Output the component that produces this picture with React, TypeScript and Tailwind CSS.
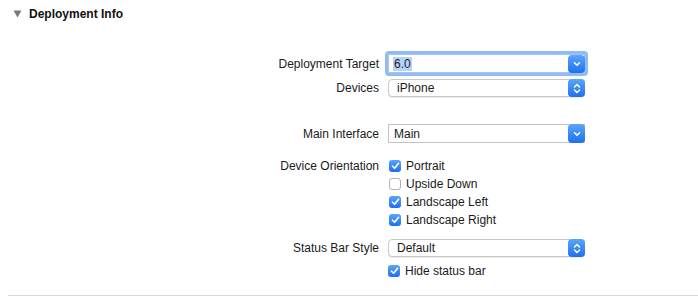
import type { ReactNode } from 'react';

const font = { fontFamily: '"Liberation Sans", Arial, sans-serif' };

function Chevron({ double }: { double?: boolean }) {
  if (double) {
    return (
      <svg width="8" height="11" viewBox="0 0 8 11" fill="none">
        <path d="M1.5 4 L4 1.5 L6.5 4" stroke="white" strokeWidth="1.5" strokeLinecap="round" strokeLinejoin="round" />
        <path d="M1.5 7 L4 9.5 L6.5 7" stroke="white" strokeWidth="1.5" strokeLinecap="round" strokeLinejoin="round" />
      </svg>
    );
  }
  return (
    <svg width="8" height="6" viewBox="0 0 8 6" fill="none">
      <path d="M1.5 1.8 L4 4.3 L6.5 1.8" stroke="white" strokeWidth="1.5" strokeLinecap="round" strokeLinejoin="round" />
    </svg>
  );
}

function BlueButton({ double, className }: { double?: boolean; className: string }) {
  return (
    <div
      className={`flex items-center justify-center rounded-[4px] bg-gradient-to-b from-[#5aa6fb] to-[#1e6ff1] ${className}`}
    >
      <Chevron double={double} />
    </div>
  );
}

function Popup({ value }: { value: string }) {
  return (
    <div className="flex h-[18px] w-[197px] items-center justify-between rounded-[4px] border border-[#c8c8c8] bg-white pl-[8px] pr-0 shadow-[0_1px_0_rgba(0,0,0,0.08)]">
      <span className="text-[12px] text-[#1a1a1a]">{value}</span>
      <BlueButton double className="h-[18px] w-[17px] -mr-px" />
    </div>
  );
}

function Combo({ value, focused }: { value: string; focused?: boolean }) {
  if (!focused) {
    return (
      <div className="flex h-[19px] w-[197px] items-center justify-between border border-[#c4c4c4] bg-white pl-[4px]">
        <span className="px-[1px] text-[12px] text-[#1a1a1a]">{value}</span>
        <BlueButton className="h-[19px] w-[17px] -mr-px" />
      </div>
    );
  }
  return (
    <div className="-ml-[3px] rounded-[4px] border-[3px] border-[#90bcf3]">
      <div className="flex h-[19px] w-[197px] items-center justify-between border border-[#a9c4e8] bg-white pl-[4px]">
        <span className="bg-[#b4d3fa] px-[1px] text-[12px] leading-[14px] text-[#1a1a1a]">{value}</span>
        <BlueButton className="h-[18px] w-[17px] -mr-px" />
      </div>
    </div>
  );
}

function Checkbox({ checked, label }: { checked: boolean; label: string }) {
  return (
    <div className="flex h-[18px] items-center gap-[5px]">
      {checked ? (
        <div className="flex h-[12px] w-[12px] items-center justify-center rounded-[3px] bg-gradient-to-b from-[#58a5fb] to-[#1c6ef1]">
          <svg width="9" height="8" viewBox="0 0 9 8" fill="none">
            <path d="M1.5 4.2 L3.6 6.3 L7.6 1.3" stroke="white" strokeWidth="1.6" strokeLinecap="round" strokeLinejoin="round" />
          </svg>
        </div>
      ) : (
        <div className="h-[12px] w-[12px] rounded-[3px] border border-[#b2b2b2] bg-white" />
      )}
      <span className="text-[12px] text-[#1a1a1a]">{label}</span>
    </div>
  );
}

function Row({ label, children, className = '' }: { label?: string; children: ReactNode; className?: string }) {
  return (
    <div className={`flex items-center ${className}`}>
      <div className="w-[380px] pr-[1px] text-right text-[12px] text-[#1a1a1a]">{label}</div>
      <div className="ml-[8px]">{children}</div>
    </div>
  );
}

export default function App() {
  return (
    <div className="relative h-[299px] w-[698px] overflow-hidden bg-white" style={font}>
      <div className="flex h-[28px] items-center pl-[13px]">
        <svg width="9" height="8" viewBox="0 0 9 8">
          <path d="M0.5 0.5 L8.5 0.5 L4.5 7.5 Z" fill="#7a7a7a" />
        </svg>
        <span className="ml-[7px] text-[12px] font-bold text-[#111]">Deployment Info</span>
      </div>

      <Row label="Deployment Target" className="mt-[23px] h-[25px]">
        <Combo value="6.0" focused />
      </Row>

      <Row label="Devices" className="mt-[3px] h-[18px]">
        <Popup value="iPhone" />
      </Row>

      <Row label="Main Interface" className="mt-[27px] h-[19px]">
        <Combo value="Main" />
      </Row>

      <div className="mt-[14px] flex items-start leading-[18px]">
        <div className="w-[380px] pr-[1px] text-right text-[12px] text-[#1a1a1a]">Device Orientation</div>
        <div className="ml-[9px] flex flex-col">
          <Checkbox checked label="Portrait" />
          <Checkbox checked={false} label="Upside Down" />
          <Checkbox checked label="Landscape Left" />
          <Checkbox checked label="Landscape Right" />
        </div>
      </div>

      <Row label="Status Bar Style" className="mt-[10px] h-[18px]">
        <Popup value="Default" />
      </Row>

      <Row className="mt-[5px] h-[18px]">
        <Checkbox checked label="Hide status bar" />
      </Row>

      <div className="ml-[8px] mt-[15px] h-px bg-[#d6d6d6]" />
    </div>
  );
}
